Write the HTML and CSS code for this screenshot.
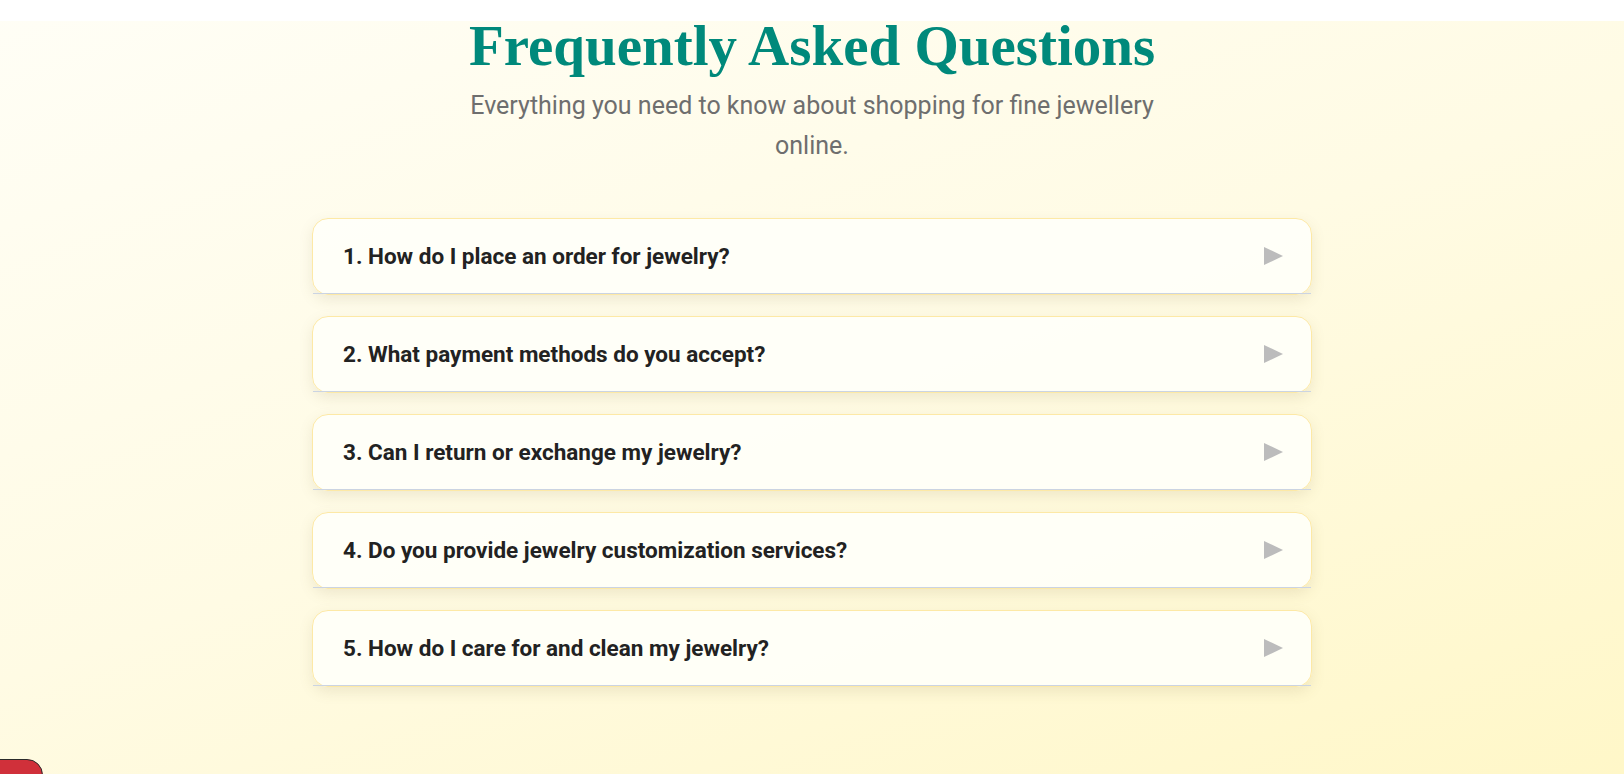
FILE: index.html
```html
<!DOCTYPE html>
<html lang="en">
<head>
<meta charset="utf-8">
<title>FAQ</title>
<link rel="stylesheet" href="styles.css">
</head>
<body>
<div class="topbar"></div>
<section class="faq">
  <h1 class="faq-title">Frequently Asked Questions</h1>
  <p class="faq-sub">Everything you need to know about shopping for fine jewellery online.</p>
  <div class="faq-list">
    <div class="faq-item"><div class="faq-q"><span>1. How do I place an order for jewelry?</span><svg class="arrow" width="19" height="18" viewBox="0 0 19 18"><polygon points="0,0 19,9 0,18" /></svg></div></div>
    <div class="faq-item"><div class="faq-q"><span>2. What payment methods do you accept?</span><svg class="arrow" width="19" height="18" viewBox="0 0 19 18"><polygon points="0,0 19,9 0,18" /></svg></div></div>
    <div class="faq-item"><div class="faq-q"><span>3. Can I return or exchange my jewelry?</span><svg class="arrow" width="19" height="18" viewBox="0 0 19 18"><polygon points="0,0 19,9 0,18" /></svg></div></div>
    <div class="faq-item"><div class="faq-q"><span>4. Do you provide jewelry customization services?</span><svg class="arrow" width="19" height="18" viewBox="0 0 19 18"><polygon points="0,0 19,9 0,18" /></svg></div></div>
    <div class="faq-item"><div class="faq-q"><span>5. How do I care for and clean my jewelry?</span><svg class="arrow" width="19" height="18" viewBox="0 0 19 18"><polygon points="0,0 19,9 0,18" /></svg></div></div>
  </div>
</section>
<div class="float-btn"></div>
</body>
</html>
```
FILE: styles.css
```css
html, body {
  margin: 0;
  padding: 0;
}
body {
  min-height: 774px;
  background: linear-gradient(160deg, #fffef6 0%, #fffbe4 50%, #fff7c8 100%);
  font-family: Roboto, "Liberation Sans", sans-serif;
  overflow: hidden;
}
.topbar {
  position: fixed;
  top: 0;
  left: 0;
  right: 0;
  height: 21px;
  background: #ffffff;
  z-index: 10;
}
.faq {
  padding: 12px 0 60px;
  display: flex;
  flex-direction: column;
  align-items: center;
}
.faq-title {
  margin: 0;
  font-family: "Liberation Serif", "Times New Roman", serif;
  font-weight: 700;
  font-size: 57px;
  line-height: 1.2;
  color: #00897b;
  text-align: center;
}
.faq-sub {
  margin: 6px 0 0;
  max-width: 720px;
  font-size: 25px;
  line-height: 40px;
  color: #6e6e6e;
  text-align: center;
}
.faq-list {
  margin-top: 52px;
  width: 1000px;
  display: flex;
  flex-direction: column;
  gap: 21px;
}
.faq-item {
  border: 1px solid #fde9a6;
  border-radius: 16px;
  background: rgba(255, 255, 250, 0.9);
  box-shadow: 0 5px 14px rgba(120, 110, 60, 0.13);
}
.faq-q {
  height: 75px;
  box-sizing: border-box;
  padding: 0 28px 0 30px;
  display: flex;
  align-items: center;
  justify-content: space-between;
  border-bottom: 1px solid #cbd4e2;
  font-size: 22.5px;
  font-weight: 700;
  color: #222222;
}
.arrow {
  fill: #bcbcbc;
  flex: none;
}
.float-btn {
  position: fixed;
  left: -22px;
  bottom: -30px;
  width: 63px;
  height: 43px;
  background: #d0303a;
  border: 1px solid #2a2a2a;
  border-radius: 16px;
}
```
